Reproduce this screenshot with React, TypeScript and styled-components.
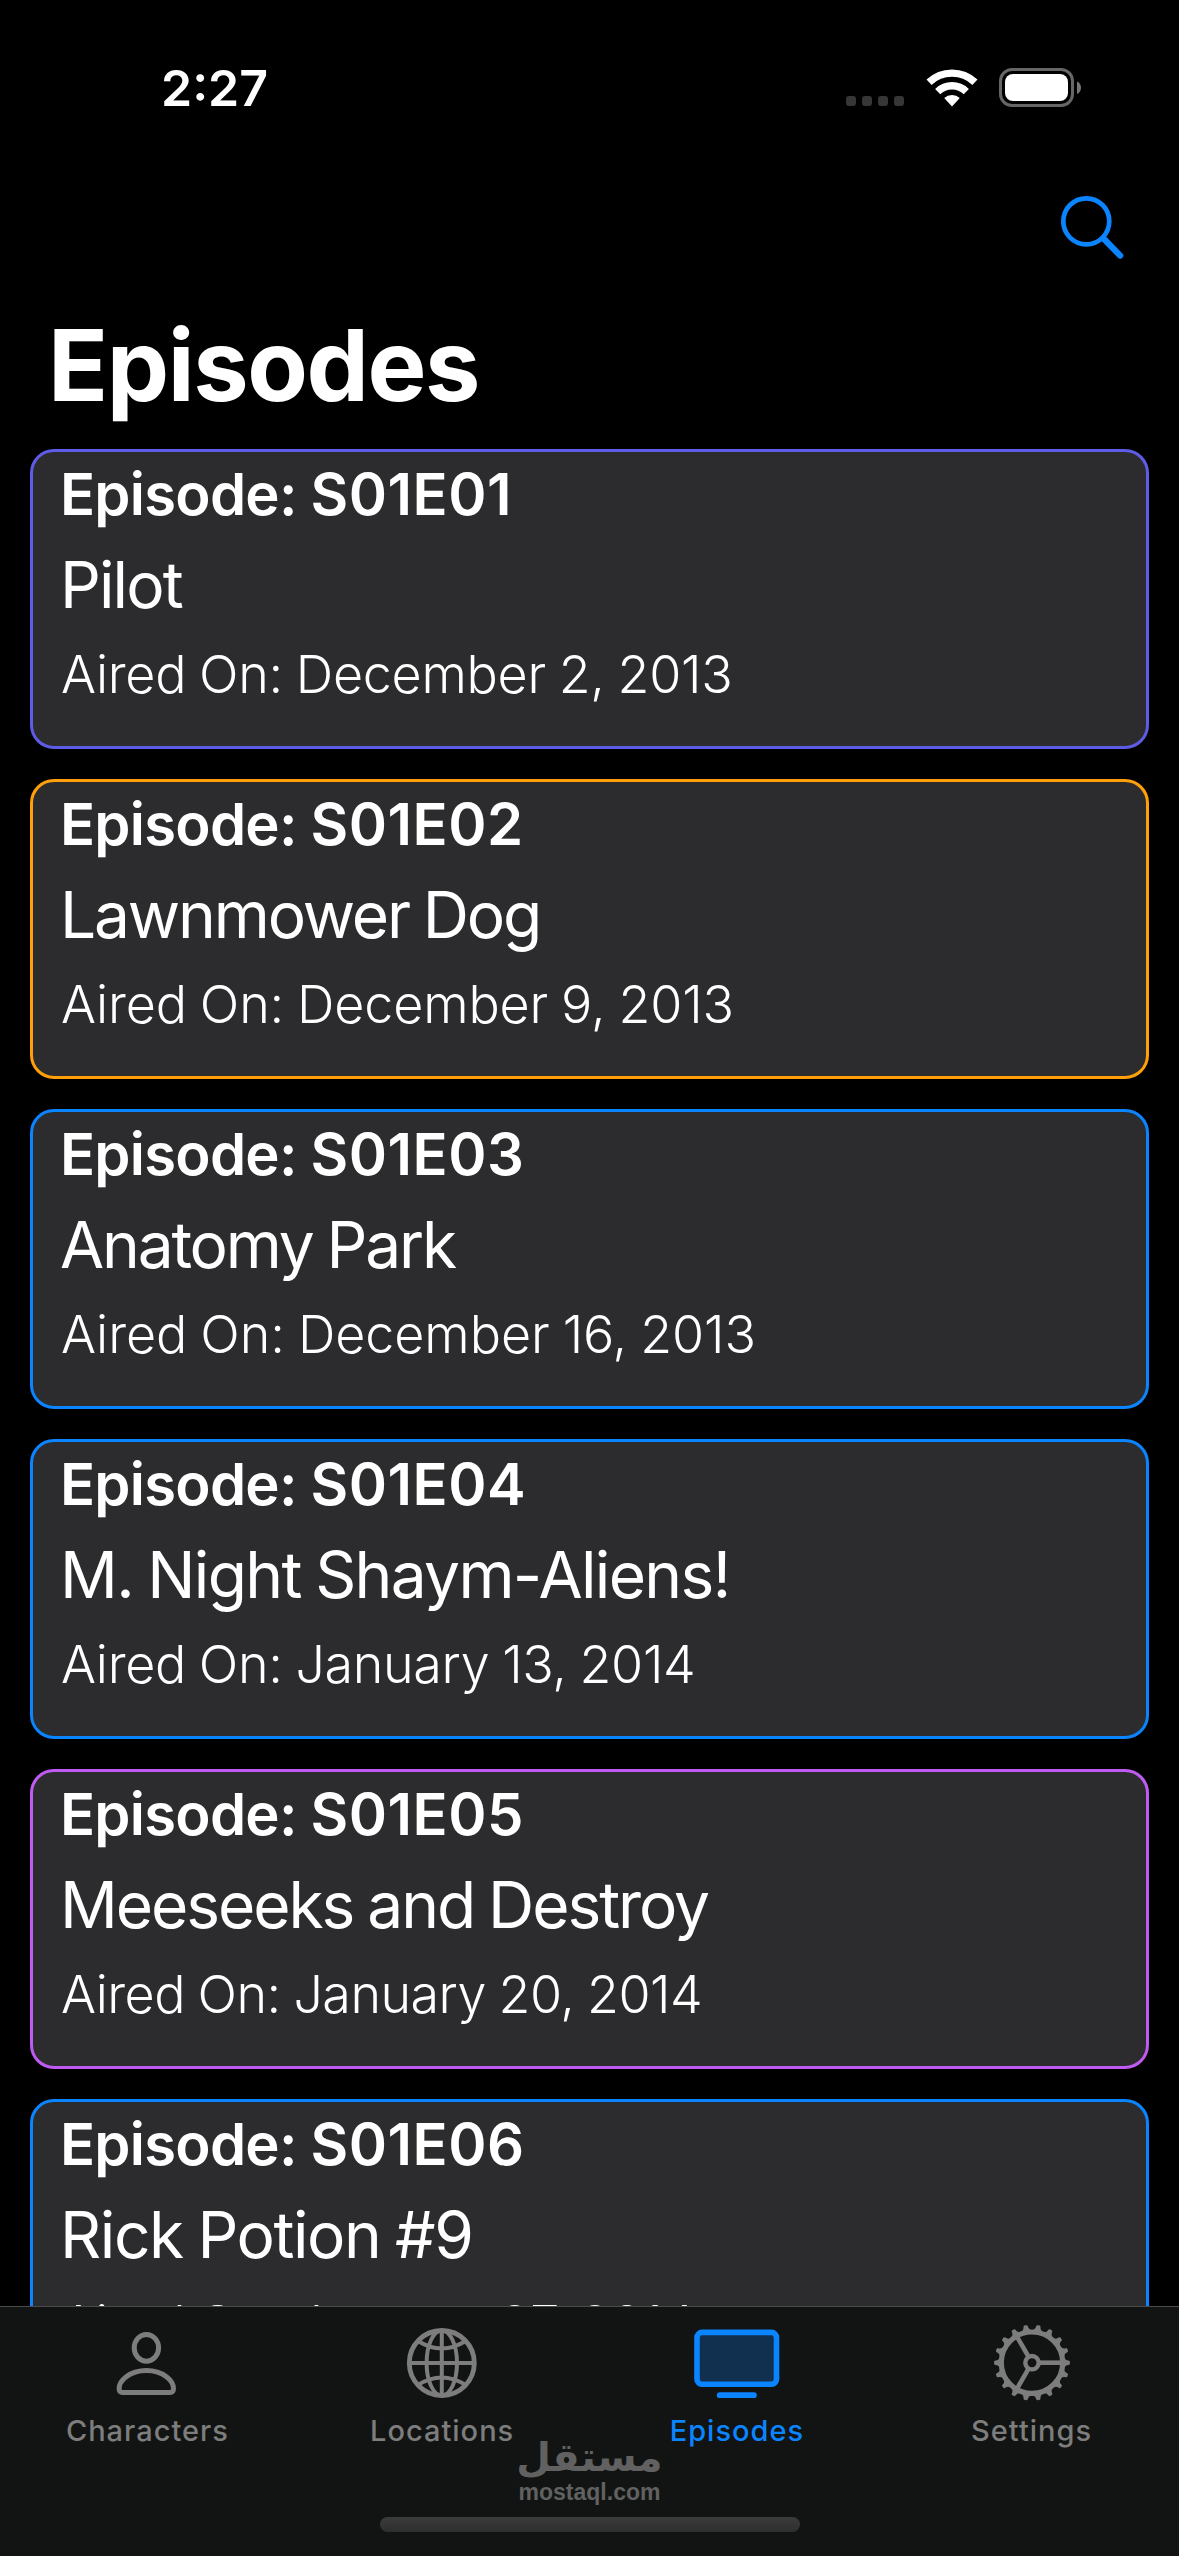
import React from "react";
import styled, { createGlobalStyle } from "styled-components";

const BLUE = "#0a84ff";
const INDIGO = "#5e5ce6";
const ORANGE = "#ff9f0a";
const PURPLE = "#bf5af2";
const GREY = "#7c7d7c";

const GlobalStyle = createGlobalStyle`
  html, body {
    margin: 0;
    background: #000;
  }
  * {
    box-sizing: border-box;
  }
`;

const Screen = styled.div`
  position: relative;
  display: flex;
  flex-direction: column;
  width: 1179px;
  height: 2556px;
  overflow: hidden;
  background: #000;
  color: #fff;
  font-family: Inter, "Noto Sans", sans-serif;
`;

const StatusBar = styled.header`
  display: flex;
  justify-content: space-between;
  align-items: center;
  flex: none;
  height: 176px;
  padding: 0 96px 0 161px;
`;

const Clock = styled.time`
  font-size: 50px;
  font-weight: 600;
  line-height: 60px;
`;

const StatusIcons = styled.div`
  display: flex;
  align-items: center;
  gap: 21.5px;
`;

const SignalDots = styled.div`
  display: flex;
  gap: 6px;
  margin-top: 26px;
`;

const SignalDot = styled.span`
  width: 10px;
  height: 10px;
  border-radius: 3px;
  background: #363636;
`;

const NavBar = styled.nav`
  display: flex;
  justify-content: flex-end;
  flex: none;
  height: 129px;
  padding: 17px 52px 0 0;
`;

const IconButton = styled.button`
  display: flex;
  width: 72px;
  height: 72px;
  padding: 0;
  border: 0;
  background: none;
  color: ${BLUE};
`;

const Title = styled.h1`
  flex: none;
  margin: 0;
  padding: 0 48px;
  font-size: 99px;
  font-weight: 700;
  line-height: 120px;
  letter-spacing: -1.4px;
`;

const EpisodeList = styled.main`
  display: flex;
  flex: 1;
  flex-direction: column;
  gap: 30px;
  min-height: 0;
  padding: 24px 30px 0;
  overflow: hidden;
`;

const EpisodeCard = styled.article<{ $accent: string }>`
  display: flex;
  flex: none;
  flex-direction: column;
  height: 300px;
  padding: 6px 27px 0;
  border: 3px solid ${(p) => p.$accent};
  border-radius: 24px;
  background: #2c2c2e;
  white-space: nowrap;
`;

const EpisodeCode = styled.h2`
  margin: 0;
  font-size: 58px;
  font-weight: 600;
  line-height: 72px;
  letter-spacing: -0.75px;
`;

const CodeValue = styled.span`
  letter-spacing: 0.5px;
`;

const EpisodeName = styled.p<{ $tracking: number }>`
  margin: 15px 0 17px;
  font-size: 64px;
  line-height: 80px;
  letter-spacing: ${(p) => p.$tracking}px;
  word-spacing: -2px;
`;

const AirDate = styled.p<{ $tracking: number }>`
  margin: 0;
  padding-left: 1px;
  font-size: 52px;
  font-weight: 300;
  line-height: 66px;
  letter-spacing: ${(p) => p.$tracking}px;
  word-spacing: -1.5px;
`;

const TabBar = styled.footer`
  display: flex;
  flex: none;
  flex-direction: column;
  align-items: center;
  justify-content: space-between;
  height: 250px;
  padding-bottom: 24px;
  border-top: 1px solid #4a4a4b;
  background: #121413;
`;

const Tabs = styled.div`
  display: grid;
  grid-template-columns: repeat(4, 1fr);
  width: 100%;
  padding-top: 16px;
`;

const Tab = styled.a<{ $active?: boolean }>`
  display: flex;
  flex-direction: column;
  align-items: center;
  gap: 10px;
  color: ${(p) => (p.$active ? BLUE : GREY)};
`;

const TabLabel = styled.span`
  font-size: 29px;
  font-weight: 500;
  line-height: 36px;
  letter-spacing: 1px;
`;

const HomeIndicator = styled.div`
  width: 420px;
  height: 15px;
  border-radius: 8px;
  background: linear-gradient(#3b3b3b, #2e2e2f);
`;

const Watermark = styled.div`
  position: absolute;
  left: 0;
  right: 0;
  top: 2436px;
  display: flex;
  flex-direction: column;
  align-items: center;
  color: #606160;
  font-weight: 700;
`;

const WatermarkArabic = styled.span`
  font-family: "DejaVu Sans", sans-serif;
  font-size: 40px;
  line-height: 43px;
`;

const WatermarkLatin = styled.span`
  font-family: "Liberation Sans", sans-serif;
  font-size: 23px;
  line-height: 26px;
`;

const arc = (cx: number, cy: number, r: number, deg: number) => {
  const a = (deg * Math.PI) / 180;
  const dx = r * Math.sin(a);
  const y = cy - r * Math.cos(a);
  return `M${cx - dx} ${y}A${r} ${r} 0 0 1 ${cx + dx} ${y}`;
};

const WifiIcon = () => (
  <svg width="52" height="40" viewBox="0 0 52 40" fill="none" stroke="#fff">
    <path d={arc(26, 38.4, 33.3, 43.5)} strokeWidth="7.4" />
    <path d={arc(26, 38.4, 20.6, 44)} strokeWidth="7.4" />
    <path d={`${arc(26, 38.4, 11.4, 43)}L26 38.4Z`} fill="#fff" stroke="none" />
  </svg>
);

const BatteryIcon = () => (
  <svg width="84" height="40" viewBox="0 0 84 40">
    <rect x="1.5" y="1.5" width="72" height="36" rx="11.5" fill="none" stroke="#666" strokeWidth="3" />
    <rect x="6" y="6" width="63" height="27" rx="8" fill="#fff" />
    <path d="M78 13.5C80.6 14.6 82 17 82 19.8S80.6 25 78 26Z" fill="#777" />
  </svg>
);

const SearchIcon = () => (
  <svg width="72" height="72" viewBox="0 0 72 72" fill="none" stroke="currentColor">
    <circle cx="31.3" cy="28.3" r="23" strokeWidth="4.7" />
    <path d="M48.5 45.5L65.2 62.6" strokeWidth="6.2" strokeLinecap="round" />
  </svg>
);

const TabIcon = ({ children }: { children: React.ReactNode }) => (
  <svg width="90" height="80" viewBox="-5 0 90 80" fill="none" stroke="currentColor">
    {children}
  </svg>
);

const PersonIcon = () => (
  <TabIcon>
    <ellipse cx="39.4" cy="24.8" rx="12.2" ry="13.4" strokeWidth="5" />
    <path
      d="M15.5 69.5Q12.1 69.5 12.1 65.5C12.1 58 22 47.5 39.4 47.5C56.8 47.5 66.5 58 66.5 65.5Q66.5 69.5 63.1 69.5Z"
      strokeWidth="5"
      strokeLinejoin="round"
    />
  </TabIcon>
);

const GlobeIcon = () => (
  <TabIcon>
    <circle cx="39.8" cy="40" r="32.5" strokeWidth="4.8" />
    <ellipse cx="39.8" cy="40" rx="15.2" ry="32.5" strokeWidth="4" />
    <path d="M39.8 8V72M7.5 40H72" strokeWidth="4" />
    <path d="M16 18Q39.8 33 63.6 18M16 62Q39.8 47 63.6 62" strokeWidth="4" />
  </TabIcon>
);

const TvIcon = () => (
  <TabIcon>
    <rect x="0" y="9.4" width="79.5" height="51.8" rx="5" strokeWidth="5.6" fill="#112f4e" />
    <path d="M22.7 72.2H56.9" strokeWidth="5.8" strokeLinecap="round" />
  </TabIcon>
);

const GearIcon = () => (
  <TabIcon>
    {Array.from({ length: 18 }, (_, i) => (
      <path
        key={i}
        d="M71.5 35.6Q73.5 38.4 77 38.6V40.8Q73.5 41 71.5 43.8Z"
        fill="currentColor"
        strokeWidth="1.8"
        strokeLinejoin="round"
        transform={`rotate(${i * 20} 40 39.7)`}
      />
    ))}
    <circle cx="40" cy="39.7" r="30.7" strokeWidth="5.2" />
    <circle cx="40" cy="39.7" r="6.7" strokeWidth="4.4" />
    {[0, 120, 240].map((deg) => (
      <path key={deg} d="M48 39.7H69" strokeWidth="4.6" transform={`rotate(${deg} 40 39.7)`} />
    ))}
  </TabIcon>
);

const episodes = [
  { code: "S01E01", name: "Pilot", aired: "December 2, 2013", accent: INDIGO, nameTracking: -1.9, dateTracking: -0.28 },
  { code: "S01E02", name: "Lawnmower Dog", aired: "December 9, 2013", accent: ORANGE, nameTracking: -2.15, dateTracking: -0.15 },
  { code: "S01E03", name: "Anatomy Park", aired: "December 16, 2013", accent: BLUE, nameTracking: -2.15, dateTracking: -0.07 },
  { code: "S01E04", name: "M. Night Shaym-Aliens!", aired: "January 13, 2014", accent: BLUE, nameTracking: -1.65, dateTracking: -0.32 },
  { code: "S01E05", name: "Meeseeks and Destroy", aired: "January 20, 2014", accent: PURPLE, nameTracking: -2.05, dateTracking: -0.52 },
  { code: "S01E06", name: "Rick Potion #9", aired: "January 27, 2014", accent: BLUE, nameTracking: -1.4, dateTracking: -0.5 },
];

const tabs = [
  { label: "Characters", Icon: PersonIcon },
  { label: "Locations", Icon: GlobeIcon },
  { label: "Episodes", Icon: TvIcon, active: true },
  { label: "Settings", Icon: GearIcon },
];

export default function App() {
  return (
    <>
      <GlobalStyle />
      <Screen>
        <StatusBar>
          <Clock>2:27</Clock>
          <StatusIcons>
            <SignalDots>
              <SignalDot />
              <SignalDot />
              <SignalDot />
              <SignalDot />
            </SignalDots>
            <WifiIcon />
            <BatteryIcon />
          </StatusIcons>
        </StatusBar>
        <NavBar>
          <IconButton aria-label="Search">
            <SearchIcon />
          </IconButton>
        </NavBar>
        <Title>Episodes</Title>
        <EpisodeList>
          {episodes.map((e) => (
            <EpisodeCard key={e.code} $accent={e.accent}>
              <EpisodeCode>
                Episode: <CodeValue>{e.code}</CodeValue>
              </EpisodeCode>
              <EpisodeName $tracking={e.nameTracking}>{e.name}</EpisodeName>
              <AirDate $tracking={e.dateTracking}>Aired On: {e.aired}</AirDate>
            </EpisodeCard>
          ))}
        </EpisodeList>
        <TabBar>
          <Tabs>
            {tabs.map(({ label, Icon, active }) => (
              <Tab key={label} $active={active}>
                <Icon />
                <TabLabel>{label}</TabLabel>
              </Tab>
            ))}
          </Tabs>
          <HomeIndicator />
        </TabBar>
        <Watermark>
          <WatermarkArabic lang="ar">مستقل</WatermarkArabic>
          <WatermarkLatin>mostaql.com</WatermarkLatin>
        </Watermark>
      </Screen>
    </>
  );
}
